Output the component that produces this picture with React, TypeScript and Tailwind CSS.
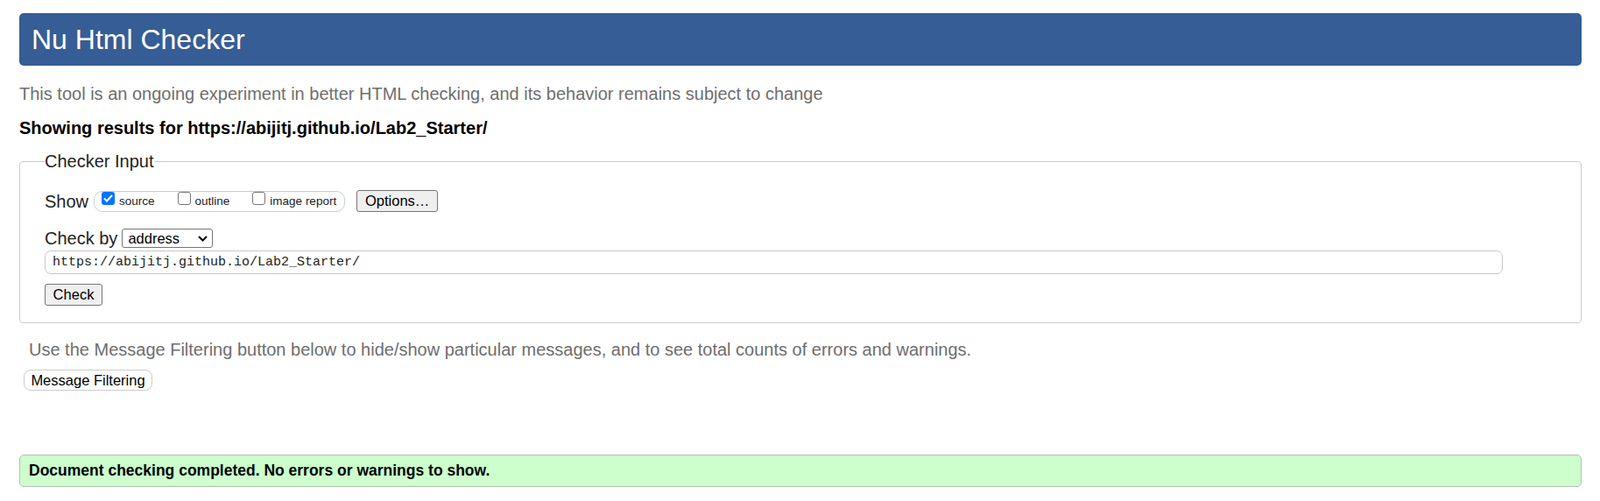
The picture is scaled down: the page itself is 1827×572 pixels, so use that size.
export default function App() {
  const boxes = [
    { label: "source", checked: true },
    { label: "outline", checked: false },
    { label: "image report", checked: false },
  ];

  return (
    <div className="min-h-screen bg-white pl-[22px] pr-[21px] pt-[15px] font-['Liberation_Sans',Arial,sans-serif] text-[#222]">
      <header className="flex h-[60px] items-center rounded-[5px] bg-[#365d95] pl-[14px]">
        <h1 className="text-[32px] leading-none text-white">Nu Html Checker</h1>
      </header>

      <p className="mt-[20px] text-[20px] leading-[24px] text-[#6e6e6e]">
        This tool is an ongoing experiment in better HTML checking, and its behavior remains subject to change
      </p>
      <p className="mt-[15px] text-[20px] font-bold leading-[24px] text-black">
        Showing results for https://abijitj.github.io/Lab2_Starter/
      </p>

      <fieldset className="mt-[14px] rounded-[4px] border border-[#cccccc] pb-[19px] pl-[28px] pr-[20px] pt-[21px]">
        <legend className="text-[20px] leading-[24px]">Checker Input</legend>

        <div className="flex h-[25px] items-center">
          <span className="text-[20px] leading-[20px]">Show</span>
          <div className="ml-[6px] flex h-[24px] items-center rounded-[10px] border border-[#cccccc] pl-[8px] pr-[9px]">
            {boxes.map((b, i) => (
              <label key={b.label} className={`flex items-center ${i > 0 ? "ml-[26px]" : ""}`}>
                {b.checked ? (
                  <span className="mb-[6px] flex h-[15px] w-[15px] items-center justify-center rounded-[3px] bg-[#0075ff]">
                    <svg width="11" height="9" viewBox="0 0 11 9">
                      <path d="M1 4.5 L4 7.5 L10 1" fill="none" stroke="white" strokeWidth="2" />
                    </svg>
                  </span>
                ) : (
                  <span className="mb-[6px] h-[15px] w-[15px] rounded-[3px] border border-[#767676] bg-white" />
                )}
                <span className="ml-[5px] text-[13.5px] leading-[16px]">{b.label}</span>
              </label>
            ))}
          </div>
          <button className="ml-[13px] h-[25px] w-[93px] rounded-[3px] border border-[#767676] bg-[#efefef] text-[16.5px] leading-none text-black">
            Options…
          </button>
        </div>

        <div className="mt-[19px] flex h-[22px] items-center">
          <span className="text-[20px] leading-[20px]">Check by</span>
          <div className="ml-[5px] flex h-[22px] w-[104px] items-center justify-between rounded-[3px] border border-[#767676] bg-white pl-[6px] pr-[5px]">
            <span className="text-[16.5px] leading-none text-black">address</span>
            <svg width="11" height="7" viewBox="0 0 11 7">
              <path d="M1 1 L5.5 5.5 L10 1" fill="none" stroke="black" strokeWidth="2" />
            </svg>
          </div>
        </div>

        <input
          readOnly
          value="https://abijitj.github.io/Lab2_Starter/"
          className="mt-[3px] block h-[27px] w-[1665px] rounded-[7px] border border-[#c8c8c8] pl-[8px] font-['Liberation_Mono',monospace] text-[15px] text-[#222] outline-none"
        />

        <button className="mt-[11px] block h-[25px] w-[66px] rounded-[3px] border border-[#767676] bg-[#efefef] text-[16.5px] leading-none text-black">
          Check
        </button>
      </fieldset>

      <p className="ml-[11px] mt-[18px] text-[20px] leading-[24px] text-[#6e6e6e]">
        Use the Message Filtering button below to hide/show particular messages, and to see total counts of errors and warnings.
      </p>
      <button className="ml-[5px] mt-[11px] block h-[24px] w-[147px] rounded-[8px] border border-[#cccccc] bg-white text-[16.5px] leading-none text-black">
        Message Filtering
      </button>

      <div className="mt-[73px] flex h-[37px] items-center rounded-[5px] border border-[#bbbbbb] bg-[#ccffcc] pl-[10px]">
        <span className="text-[17.5px] font-bold text-black">
          Document checking completed. No errors or warnings to show.
        </span>
      </div>
    </div>
  );
}
